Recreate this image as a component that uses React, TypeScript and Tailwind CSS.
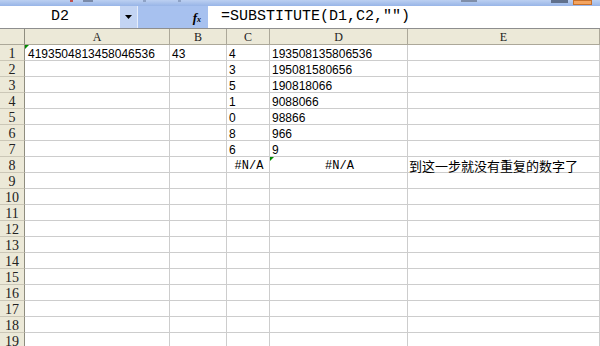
const rows: { c?: string; d?: string; e?: string; na?: boolean }[] = [
  { c: "4", d: "193508135806536" },
  { c: "3", d: "195081580656" },
  { c: "5", d: "190818066" },
  { c: "1", d: "9088066" },
  { c: "0", d: "98866" },
  { c: "8", d: "966" },
  { c: "6", d: "9" },
  { na: true, e: "到这一步就没有重复的数字了" },
];

const headerCell =
  "h-4 bg-[#ece9d8] border-r border-b border-[#aca899] flex items-end justify-center text-[12px] leading-[12px] text-[#222]";
const cell = "h-4 bg-white border-r border-b border-[#cdcdcd] flex items-end text-[12px] leading-[11px] text-black whitespace-nowrap";

const Marker = () => (
  <span className="absolute left-0 top-0 w-0 h-0 border-t-[4px] border-t-[#008a00] border-r-[4px] border-r-transparent" />
);

export default function App() {
  const allRows = Array.from({ length: 19 }, (_, i) => rows[i] ?? {});

  return (
    <div className="w-[600px] h-[346px] overflow-hidden bg-white font-['Liberation_Sans',sans-serif]">
      {/* cut-off toolbar strip */}
      <div className="h-[6px] flex items-start bg-gradient-to-b from-[#bcd0f1] to-[#98b5e7]">
        <span className="ml-[70px] w-[3px] h-[2px] bg-[#c0504d]" />
        <span className="ml-[10px] w-[10px] h-[2px] bg-[#7a8aa8]" />
        <span className="ml-[50px] w-[3px] h-[2px] bg-[#8fa3c6]" />
        <span className="ml-[32px] w-[3px] h-[2px] bg-[#8fa3c6]" />
        <span className="ml-[280px] w-[16px] h-[2px] bg-[#7f8ea9]" />
        <span className="ml-[74px] w-[17px] h-[3px] bg-[#60708c]" />
        <span className="ml-[5px] w-[19px] h-[5px] bg-[#f4a460] border border-[#c8702a]" />
      </div>

      {/* formula bar */}
      <div className="h-[23px] flex border-b border-[#8e8e8e]">
        <div className="w-[120px] bg-white flex items-center justify-center font-['Liberation_Mono',monospace] text-[15px] text-black">
          D2
        </div>
        <div className="w-[17px] bg-[#c3d4f3] flex items-center justify-center">
          <svg width="7" height="4" viewBox="0 0 7 4">
            <path d="M0 0h7L3.5 4z" fill="#000" />
          </svg>
        </div>
        <div className="w-[1px] bg-[#e6edfa]" />
        <div className="w-[70px] bg-[#a7c1ef] flex items-center justify-end pr-[7px]">
          <span className="font-['Liberation_Serif',serif] italic font-bold text-[13px] leading-none text-black">
            f<span className="text-[8px]">x</span>
          </span>
        </div>
        <div className="flex-1 bg-white flex items-center pl-[13px] font-['Liberation_Mono',monospace] text-[15px] text-black whitespace-nowrap">
          =SUBSTITUTE(D1,C2,"")
        </div>
      </div>

      {/* sheet */}
      <div className="grid grid-cols-[25px_145px_57px_43px_138px_1fr]">
        <div className={`${headerCell} border-r-[#8f8d7f]`} />
        {["A", "B", "C", "D", "E"].map((l) => (
          <div key={l} className={`${headerCell} font-['Liberation_Serif',serif]`}>
            <span className="mb-[1px]">{l}</span>
          </div>
        ))}

        {allRows.map((r, i) => (
          <div key={i} className="contents">
            <div className="h-4 bg-[#ece9d8] border-r border-b border-r-[#8f8d7f] border-b-[#cbc7b7] flex items-end justify-center font-['Liberation_Serif',serif] text-[14px] leading-[12px] text-[#222]">
              {i + 1}
            </div>
            <div className={`${cell} pl-[3px] relative`}>
              {i === 0 && <Marker />}
              {i === 0 && "4193504813458046536"}
            </div>
            <div className={`${cell} pl-[2px]`}>{i === 0 && "43"}</div>
            <div className={`${cell} pl-[2px] ${r.na ? "justify-center" : ""}`}>
              {r.na ? (
                <span className="font-['Liberation_Mono',monospace] text-[12px]">#N/A</span>
              ) : (
                r.c
              )}
            </div>
            <div className={`${cell} pl-[2px] relative ${r.na ? "justify-center" : ""}`}>
              {r.na && <Marker />}
              {r.na ? (
                <span className="font-['Liberation_Mono',monospace] text-[12px]">#N/A</span>
              ) : (
                r.d
              )}
            </div>
            <div className={`${cell} pl-[1px]`}>
              {r.e && (
                <span className="font-['Noto_Sans_CJK_SC',sans-serif] text-[13px] leading-[13px]">{r.e}</span>
              )}
            </div>
          </div>
        ))}
      </div>
    </div>
  );
}
